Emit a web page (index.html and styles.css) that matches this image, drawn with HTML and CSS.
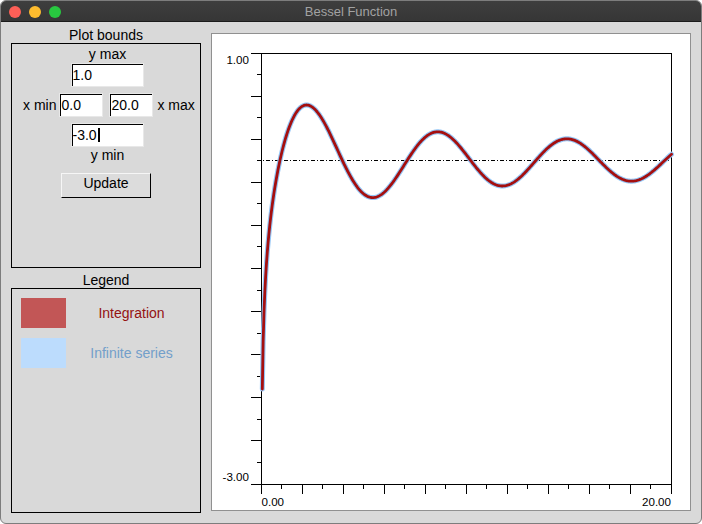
FILE: index.html
```html
<!DOCTYPE html>
<html lang="en">
<head>
<meta charset="utf-8">
<title>Bessel Function</title>
<link rel="stylesheet" href="styles.css">
</head>
<body>
<div class="window">
  <header class="titlebar">
    <div class="lights">
      <span class="light light-red"></span>
      <span class="light light-yellow"></span>
      <span class="light light-green"></span>
    </div>
    <div class="title">Bessel Function</div>
    <div class="title-spacer"></div>
  </header>
  <main class="content">
    <aside class="sidebar">
      <div class="group-label">Plot bounds</div>
      <section class="group bounds">
        <div class="label">y max</div>
        <div class="entry entry-wide entry-top">1.0</div>
        <div class="xrow">
          <span class="xlabel xlabel-min">x min</span>
          <div class="entry entry-narrow">0.0</div>
          <div class="entry entry-narrow entry-second">20.0</div>
          <span class="xlabel xlabel-max">x max</span>
        </div>
        <div class="entry entry-wide entry-bottom">-3.0<span class="caret"></span></div>
        <div class="label">y min</div>
        <button class="button" type="button">Update</button>
      </section>
      <div class="group-label legend-label">Legend</div>
      <section class="group legend">
        <div class="legend-row">
          <span class="swatch swatch-red"></span>
          <span class="legend-text text-red">Integration</span>
        </div>
        <div class="legend-row">
          <span class="swatch swatch-blue"></span>
          <span class="legend-text text-blue">Infinite series</span>
        </div>
      </section>
    </aside>
    <div class="plot-panel">
      <svg class="plot" width="478" height="476" viewBox="0 0 478 476">
        <g class="axes" shape-rendering="crispEdges">
          <rect x="49.5" y="19.5" width="410" height="431"/>
          <path d="M39 19.5H50M45 40.5H50M39 62.5H50M45 83.5H50M39 105.5H50M45 126.5H50M39 148.5H50M45 169.5H50M39 191.5H50M45 212.5H50M39 234.5H50M45 256.5H50M39 277.5H50M45 299.5H50M39 320.5H50M45 342.5H50M39 363.5H50M45 385.5H50M39 406.5H50M45 428.5H50M39 450.5H50"/>
          <path d="M49.5 450V460M69.5 450V455M90.5 450V460M110.5 450V455M131.5 450V460M151.5 450V455M172.5 450V460M192.5 450V455M213.5 450V460M233.5 450V455M254.5 450V460M274.5 450V455M295.5 450V460M315.5 450V455M336.5 450V460M356.5 450V455M377.5 450V460M397.5 450V455M418.5 450V460M438.5 450V455M459.5 450V460"/>
          <path class="zero-line" d="M45 126.5H459.5"/>
        </g>
        <path id="series" class="curve-series"/>
        <path id="integration" class="curve-integration"/>
        <g class="tick-labels">
          <text x="37" y="30" text-anchor="end">1.00</text>
          <text x="37" y="447" text-anchor="end">-3.00</text>
          <text x="49.5" y="472">0.00</text>
          <text x="459" y="472" text-anchor="end">20.00</text>
        </g>
      </svg>
    </div>
  </main>
</div>
<script src="script.js"></script>
</body>
</html>
```
FILE: styles.css
```css
* {
  box-sizing: border-box;
}

html,
body {
  margin: 0;
  padding: 0;
  background: #ffffff;
}

body {
  font-family: "Liberation Sans", Arial, sans-serif;
  font-size: 14px;
  color: #000;
}

.window {
  width: 702px;
  height: 524px;
  border: 1px solid #7d7d7d;
  border-radius: 6px;
  overflow: hidden;
  background: #d9d9d9;
  display: flex;
  flex-direction: column;
}

.titlebar {
  flex: none;
  height: 21px;
  display: grid;
  grid-template-columns: 1fr auto 1fr;
  align-items: center;
  background: linear-gradient(#3e3e3e, #363636);
  border-bottom: 1px solid #1b1b1b;
}

.lights {
  display: flex;
  gap: 8px;
  padding-left: 8px;
  margin-top: 2px;
}

.light {
  width: 12px;
  height: 12px;
  border-radius: 50%;
}

.light-red {
  background: #fe5f57;
}

.light-yellow {
  background: #febc2e;
}

.light-green {
  background: #28c840;
}

.title {
  font-size: 13px;
  line-height: 18px;
  padding-top: 2px;
  color: #a2a2a2;
  white-space: nowrap;
}

.content {
  flex: 1;
  display: flex;
  gap: 10px;
  padding: 5px 10px 10px;
}

.sidebar {
  flex: none;
  width: 190px;
  display: flex;
  flex-direction: column;
}

.group-label {
  line-height: 16px;
  text-align: center;
}

.legend-label {
  margin-top: 4px;
}

.group {
  border: 1px solid #000;
  height: 225px;
}

.bounds {
  display: flex;
  flex-direction: column;
  align-items: center;
  padding: 2px 0 0 3px;
}

.label {
  line-height: 16px;
}

.entry {
  height: 24px;
  line-height: 22px;
  background: #fff;
  border: 1px solid #e8e8e8;
  box-shadow: inset 1px 1px 0 #000;
  padding-left: 1px;
  white-space: nowrap;
}

.entry-wide {
  width: 73px;
  margin-right: 1px;
}

.entry-top {
  margin-top: 1px;
}

.entry-bottom {
  margin-top: 6px;
}

.entry-narrow {
  width: 44px;
}

.entry-second {
  margin-left: 6px;
}

.caret {
  display: inline-block;
  width: 2px;
  height: 14px;
  margin-left: 1px;
  background: #000;
  vertical-align: -2px;
}

.xrow {
  align-self: stretch;
  display: flex;
  align-items: center;
  margin-top: 6px;
  padding-left: 8px;
}

.xlabel-min {
  margin-right: 3px;
}

.xlabel-max {
  margin-left: 4px;
}

.button {
  appearance: none;
  width: 90px;
  height: 25px;
  margin-top: 10px;
  margin-right: 3px;
  padding: 0 0 4px;
  font: inherit;
  line-height: 19px;
  color: #000;
  background: #dcdcdc;
  border: 1px solid;
  border-color: #f6f6f6 #000 #000 #f6f6f6;
  border-radius: 0;
}

.legend {
  display: flex;
  flex-direction: column;
  gap: 10px;
  padding: 9px 3px 0 9px;
}

.legend-row {
  display: flex;
  align-items: center;
  height: 30px;
}

.swatch {
  flex: none;
  width: 45px;
  height: 30px;
}

.swatch-red {
  background: #c25656;
}

.swatch-blue {
  background: #bcdcfd;
}

.legend-text {
  flex: 1;
  text-align: center;
}

.text-red {
  color: #941212;
}

.text-blue {
  color: #739fca;
}

.plot-panel {
  flex: none;
  width: 480px;
  height: 478px;
  margin-top: 6px;
  border: 1px solid #909090;
  background: #fff;
}

.plot {
  display: block;
}

.axes {
  fill: none;
  stroke: #000;
  stroke-width: 1;
}

.zero-line {
  stroke-dasharray: 4 2 1 2;
}

.curve-series {
  fill: none;
  stroke: #94c6f6;
  stroke-width: 5;
  stroke-linejoin: round;
  stroke-linecap: round;
}

.curve-integration {
  fill: none;
  stroke: #a50f0f;
  stroke-width: 2.8;
  stroke-linejoin: round;
  stroke-linecap: round;
}

.tick-labels {
  font-family: "Liberation Sans", Arial, sans-serif;
  font-size: 11.6px;
  fill: #000;
}
```
FILE: script.js
```js
(function () {
  function j0(x) {
    var ax = Math.abs(x), y, ans1, ans2, z, xx;
    if (ax < 8) {
      y = x * x;
      ans1 = 57568490574.0 + y * (-13362590354.0 + y * (651619640.7 + y * (-11214424.18 + y * (77392.33017 + y * (-184.9052456)))));
      ans2 = 57568490411.0 + y * (1029532985.0 + y * (9494680.718 + y * (59272.64853 + y * (267.8532712 + y * 1.0))));
      return ans1 / ans2;
    }
    z = 8 / ax; y = z * z; xx = ax - 0.785398164;
    ans1 = 1.0 + y * (-0.1098628627e-2 + y * (0.2734510407e-4 + y * (-0.2073370639e-5 + y * 0.2093887211e-6)));
    ans2 = -0.1562499995e-1 + y * (0.1430488765e-3 + y * (-0.6911147651e-5 + y * (0.7621095161e-6 - y * 0.934935152e-7)));
    return Math.sqrt(0.636619772 / ax) * (Math.cos(xx) * ans1 - z * Math.sin(xx) * ans2);
  }

  function y0(x) {
    var y, ans1, ans2, z, xx;
    if (x < 8) {
      y = x * x;
      ans1 = -2957821389.0 + y * (7062834065.0 + y * (-512359803.6 + y * (10879881.29 + y * (-86327.92757 + y * 228.4622733))));
      ans2 = 40076544269.0 + y * (745249964.8 + y * (7189466.438 + y * (47447.26470 + y * (226.1030244 + y * 1.0))));
      return ans1 / ans2 + 0.636619772 * j0(x) * Math.log(x);
    }
    z = 8 / x; y = z * z; xx = x - 0.785398164;
    ans1 = 1.0 + y * (-0.1098628627e-2 + y * (0.2734510407e-4 + y * (-0.2073370639e-5 + y * 0.2093887211e-6)));
    ans2 = -0.1562499995e-1 + y * (0.1430488765e-3 + y * (-0.6911147651e-5 + y * (0.7621095161e-6 + y * (-0.934945152e-7))));
    return Math.sqrt(0.636619772 / x) * (Math.sin(xx) * ans1 + z * Math.cos(xx) * ans2);
  }

  var d = '';
  for (var i = 1; i <= 500; i++) {
    var x = i * 0.04;
    var v = y0(x);
    var px = 49.5 + x * 20.5;
    var py = 127 - v * 107.5;
    d += (i === 1 ? 'M' : 'L') + px.toFixed(2) + ' ' + py.toFixed(2);
  }
  document.getElementById('series').setAttribute('d', d);
  document.getElementById('integration').setAttribute('d', d);
})();
```
